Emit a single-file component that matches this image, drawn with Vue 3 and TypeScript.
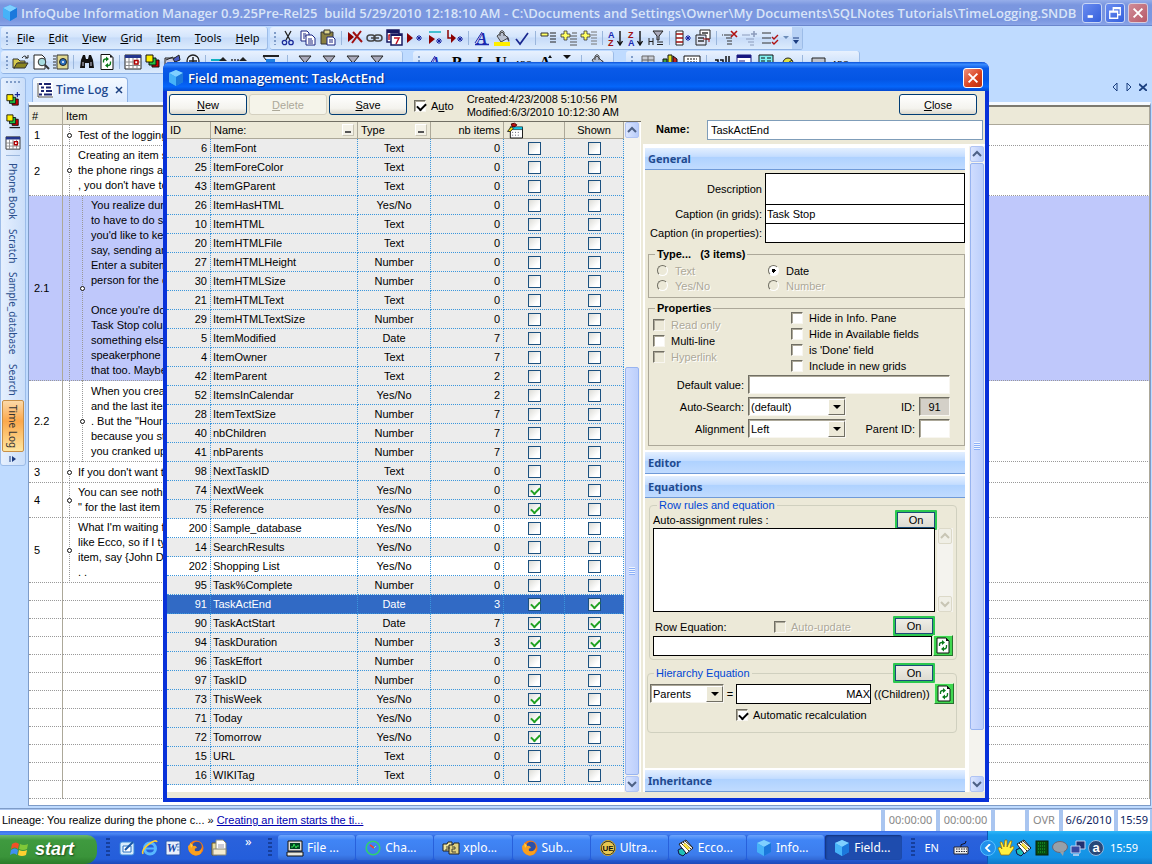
<script setup lang="ts">
import { ref } from 'vue'

interface Field {
  id: number
  name: string
  type: string
  items: number
  form?: boolean
  shown?: boolean
  user?: boolean
}

interface Note {
  no: string
  level: number
  height: number
  text: string
  selected?: boolean
}

const cube =
  '<path d="M8 0L15 3V12L8 16L1 12V3Z" fill="#2f9bf0"/><path d="M8 0L15 3L8 7L1 3Z" fill="#7fd0ff"/><path d="M8 7L15 3V12L8 16Z" fill="#1b78dc"/><path d="M1 3L8 7V16L1 12Z" fill="#46b2f8"/>'

const funnel = '<path d="M2 2H14L9 8V13H7V8Z" fill="#aab" stroke="#222"/>'
const lines = (x: number) =>
  `<path d="M${x} 3H15M${x} 6H15M${x} 9H15M${x} 12H15" stroke="#222"/>`
const plus = '<path d="M3 1H6V4H9V7H6V10H3V7H0V4H3Z" fill="#ffff66" stroke="#333" stroke-width=".8"/>'
const star = (x: number, y: number) =>
  `<path d="M${x} ${y - 3}V${y + 3}M${x - 3} ${y}H${x + 3}M${x - 2} ${y - 2}L${x + 2} ${y + 2}M${x + 2} ${y - 2}L${x - 2} ${y + 2}" stroke="#1420a0"/>`
const layers =
  '<path d="M7 6H14V13H7Z" fill="#d00000" stroke="#111"/><path d="M4 4H11V11H4Z" fill="#20c040" stroke="#111"/><path d="M1 1H8V8H1Z" fill="#ffee00" stroke="#111"/>'
const calendar =
  '<path d="M0 1H16V15H0Z" fill="#fff" stroke="#222"/><path d="M0 1H16V4H0Z" fill="#23358c"/><path d="M4 4V15M8 4V15M12 4V15M0 8H16M0 11.500H16" stroke="#888"/><path d="M9.500 6.500H13V10H9.500Z" fill="#fff" stroke="#b00000" stroke-width="1.500"/>'
const refresh =
  '<path d="M2 .5H11L14 3.500V15.500H2Z" fill="#fff" stroke="#111"/><path d="M11 .5V3.500H14Z" fill="#111"/><path d="M4.500 8.500V7Q4.500 5 7 5M11.500 7.500V9Q11.500 11.500 9 11.500" fill="none" stroke="#0a7a1a" stroke-width="1.300"/><path d="M7 2.500L10 5L7 7.500ZM9 9L6 11.500L9 14Z" fill="#0a7a1a"/>'
const bucket =
  '<path d="M3 6L8 2L14 8L7 12Z" fill="#b8c0d0" stroke="#444"/><path d="M6 6V2Q8 -1 10 2V6" fill="none" stroke="#444"/><path d="M13 6Q16 8 15 12L13 9Z" fill="#445"/>'
const fox =
  '<circle cx="8" cy="8" r="7.500" fill="#f07818"/><circle cx="9" cy="6.500" r="4.800" fill="#2c50a8"/><path d="M0 6Q3 3 5 6Q8 5 9 8Q6 8 7 11Q11 13 14 8Q14 16 7 15.500Q0 14 0 6Z" fill="#f8a020"/><path d="M2 3L5 5L3 8Z" fill="#ffd040"/>'
const ecco =
  '<path d="M1 4L8 0L15 8L8 14Z" fill="#fff" stroke="#222"/><path d="M3 3L11 11M5 2L13 9M7 1L15 8" stroke="#222"/><path d="M7 3L12 8L10 10L5 5Z" fill="#ffe640"/><path d="M0 10L4 8L8 13L5 16L1 14Z" fill="#20c0b8" stroke="#114"/>'
const letter = (t: string, extra = '') =>
  `<text x="8" y="14" text-anchor="middle" font-family="Liberation Serif" font-size="16" font-weight="bold" ${extra}>${t}</text>`
const sortLetters = (top: string, bottom: string, c1: string, c2: string) =>
  `<text x="0" y="8" font-family="Liberation Sans" font-size="9" font-weight="bold" fill="${c1}">${top}</text><text x="0" y="16" font-family="Liberation Sans" font-size="9" font-weight="bold" fill="${c2}">${bottom}</text><path d="M12 1V14M9.500 11L12 15L14.500 11" stroke="#111" fill="none" stroke-width="1.400"/>`

const icons: Record<string, string> = {
  cube,
  cut: '<path d="M5 1L10 10M11 1L6 10" stroke="#222" stroke-width="1.300"/><circle cx="4.500" cy="12.500" r="2.200" fill="none" stroke="#1a2a9a" stroke-width="1.300"/><circle cx="11" cy="12.500" r="2.200" fill="none" stroke="#1a2a9a" stroke-width="1.300"/>',
  copy: '<path d="M1 1H7L9 3V11H1Z" fill="#fff" stroke="#1a2480"/><path d="M6 5H12L15 8V15H6Z" fill="#fff" stroke="#1a2480"/><path d="M3 4H6M3 6H6M3 8H5M8 9H12M8 11H13M8 13H13" stroke="#1a2480"/>',
  paste: '<path d="M1 2H13V14H1Z" fill="#8a8040" stroke="#333"/><path d="M4 0H10V4H4Z" fill="#ddd48a" stroke="#333"/><path d="M7 7H13L15 9V15H7Z" fill="#fff" stroke="#1a2480"/><path d="M9 10H13M9 12H13" stroke="#1a2480"/>',
  delRow: '<path d="M1 2L7 7L1 12Z" fill="#8c0000"/><path d="M6 2L15 12M14 1L5 13" stroke="#a01010" stroke-width="2"/>',
  link: '<rect x="0" y="5" width="8" height="6" rx="3" fill="none" stroke="#444" stroke-width="1.500"/><rect x="7" y="5" width="8" height="6" rx="3" fill="none" stroke="#444" stroke-width="1.500"/><path d="M4 8H12" stroke="#444" stroke-width="1.500"/>',
  seven: '<path d="M0 0H12V12H0Z" fill="#fff" stroke="#181860" stroke-width="1.500"/><path d="M0 0H12V3H0Z" fill="#181860"/><path d="M4 4H15V15H4Z" fill="#fff" stroke="#181860" stroke-width="1.500"/><path d="M4 4H15V6H4Z" fill="#181860"/><path d="M1.500 5H3M2 5V10M7 8H12L9 14" fill="none" stroke="#c01020" stroke-width="1.500"/>',
  play1: '<path d="M0 3L6 8L0 13Z" fill="#8c0000"/>' + star(12, 8),
  play2: '<path d="M2 2H14" stroke="#10b0c0" stroke-width="1.300"/><path d="M2 5L8 9L2 14Z" fill="#8c0000"/>' + star(12, 11),
  play3: '<path d="M1 0V8H6" stroke="#8c0000" fill="none" stroke-width="1.500"/><path d="M4 4L9 8L4 13Z" fill="#8c0000"/>' + star(13, 9),
  fontA: letter('A', 'fill="#1a28b0" font-style="italic"') + '<path d="M1 14.500H15" stroke="#1a28b0" stroke-width="1.500"/><path d="M1 13L8 2" stroke="#1a28b0"/>',
  bucket: bucket + '<path d="M0 12H16V16H0Z" fill="#ffee00"/>',
  check: '<path d="M2 9L6 14L14 3" fill="none" stroke="#1a2890" stroke-width="1.700"/>',
  item1: '<path d="M0 3H7V6H0Z" fill="#ffff66" stroke="#333"/>' + lines(9),
  item2: plus + '<path d="M11 3H16M9 6H16M9 9H16M9 12H16M9 15H16" stroke="#555"/>',
  item3: plus + '<path d="M10 2H16M10 5H16M10 8H16M10 11H16M10 14H16" stroke="#777"/>',
  az: sortLetters('A', 'Z', '#1a28b0', '#a01010'),
  za: sortLetters('Z', 'A', '#a01010', '#1a28b0'),
  filterH: '<path d="M5 1H15L11 6V10H9V6Z" fill="#aab" stroke="#222"/><path d="M1 8V15M5 8V15M1 11.500H5M9 12H15M9 14.500H15" stroke="#222"/>',
  colNew: '<path d="M1 1H8V15H1Z" fill="#fff" stroke="#222"/><path d="M1 4H8M1 8H8M1 12H8" stroke="#a01010" stroke-width="1.500"/>' + star(13, 8),
  forms: '<path d="M5 0H15V9H5Z" fill="#fff" stroke="#222"/><path d="M1 5H11V15H1Z" fill="#dde4f4" stroke="#222"/><path d="M7 3H13M3 8H9M3 11H9" stroke="#333" stroke-width="1.300"/><path d="M8 9H14V12" stroke="#a01010" fill="none"/>',
  delLines: '<path d="M2 5H10M4 8H10M5 11H10M5 14H10M0 5H1" stroke="#333"/><path d="M9 1L15 7M15 1L9 7" stroke="#b01010" stroke-width="1.600"/>',
  addLines: '<path d="M0 5H8M4 9H12M6 12H12M8 15H12" stroke="#8c9cbc"/><path d="M12 1V7M9 4H15" stroke="#8c9cbc" stroke-width="1.600"/>',
  doneLines: '<path d="M0 3H9M0 8H9M0 13H9" stroke="#333"/><path d="M10 7L12 9L16 5M10 12L12 14L16 10" fill="none" stroke="#b01010" stroke-width="1.400"/>',
  open: '<path d="M0 5H5L7 7H12V9H5L2 14H0Z" fill="#d8cc50" stroke="#333"/><path d="M4 9H15L12 14H1Z" fill="#8a8420" stroke="#333"/><path d="M9 4Q12 0 14 4M12 4H15V1" fill="none" stroke="#222"/>',
  preview: '<path d="M1 1H9L12 4V15H1Z" fill="#fff" stroke="#222"/><circle cx="9" cy="8" r="3.800" fill="#a8dce0" stroke="#333"/><path d="M12 11L16 15" stroke="#333" stroke-width="2"/>',
  book: '<path d="M4 1H15V15H4Z" fill="#e0d890" stroke="#333"/><circle cx="10" cy="8" r="3.500" fill="#2c70c0" stroke="#222"/><circle cx="10" cy="8" r="1" fill="#fff"/><path d="M0 2H3M0 5H3M0 8H3M0 11H3M0 14H3" stroke="#333"/>',
  find: '<path d="M2 6L4 1H6L7 5H9L10 1H12L14 6L15 14H10V9H6V14H1Z" fill="#111"/><path d="M4 8V12M12 8V12" stroke="#ccd"/>',
  refresh,
  calendar,
  layers,
  layersPlus: '<g transform="translate(0 2)">' + layers + '</g><path d="M13 0V6M10 3H16" stroke="#1a2890" stroke-width="1.300"/>',
  layersLine: layers + '<path d="M4 15.500H16" stroke="#222" stroke-width="1.500"/>',
  tools: '<path d="M0 4H10V15H0Z" fill="#ccd" stroke="#222"/><path d="M8 5L14 1L15 6L10 8Z" fill="#4858c0" stroke="#222"/><path d="M1 6L8 3" stroke="#222"/>',
  zoomIn: '<circle cx="8" cy="7" r="6" fill="#e8f0fc" stroke="#222" stroke-width="1.300"/><path d="M8 3V11M4 7H12" stroke="#222" stroke-width="1.500"/>',
  arrowL: '<path d="M0 6H10" stroke="#10b0c0" stroke-width="2"/><path d="M12 3L8 7H16Z" fill="#222"/>',
  arrowR: '<path d="M0 6H8" stroke="#333" stroke-width="1.500" stroke-dasharray="2 1"/><path d="M12 3L8 7H16Z" fill="#222"/>',
  bar: '<path d="M0 1H16V3H0Z" fill="#222"/><path d="M3 5H12V8H3Z" fill="#2080e0"/><path d="M0 2L3 6" stroke="#222"/>',
  filter: funnel,
  bold: letter('B'),
  italic: letter('I', 'font-style="italic"'),
  under: letter('U'),
  abc: '<text x="0" y="12" font-family="Liberation Sans" font-size="8">ABC</text><path d="M0 9H16" stroke="#222"/>',
  grow: letter('A') + '<path d="M11 4L13 1L15 4Z" fill="#111"/>',
  shrink: '<path d="M4 1H12L8 5Z" fill="#111"/>',
  bucket2: bucket,
  grid4: '<path d="M2 2H14V14H2Z" fill="#c8ccd4" stroke="#666"/><path d="M8 2V14M2 6H14" stroke="#666"/>',
  chart: '<path d="M1 5H5V15H1Z" fill="#40a040" stroke="#111"/><path d="M6 1H10V15H6Z" fill="#e0e020" stroke="#111"/><path d="M11 2L15 5V15H11Z" fill="#c02020" stroke="#111"/>',
  sheet: '<path d="M0 2H16V14H0Z" fill="#fff" stroke="#111"/><path d="M3 5H13M3 8H13" stroke="#111" stroke-dasharray="2 1"/>',
  glyphs: '<path d="M1 6H4V9M6 6H9V9M12 2V9M15 2V9" stroke="#111" fill="none" stroke-width="1.500"/>',
  panel: '<path d="M1 1H15V14H1Z" fill="#fff" stroke="#181880"/><path d="M1 1H15V4H1Z" fill="#181880"/><path d="M3 7H9" stroke="#181880"/>',
  cyan: '<path d="M1 1H15V14H1Z" fill="#80f0f0" stroke="#111"/><path d="M3 4H7M9 4H13M3 7H7M9 7H13" stroke="#111"/>',
  ball: '<circle cx="8" cy="9" r="5" fill="#e0e040" stroke="#222"/><path d="M8 9L12 6" stroke="#222"/>',
  card: '<path d="M2 4H15V14H2Z" fill="#c0c4cc" stroke="#222"/>',
  outline: '<rect x="0" y="0" width="16" height="16" fill="#fff"/><path d="M1 1V15H16" stroke="#222" fill="none" stroke-width=".8"/><path d="M2 2H5M7 2H14M4 5.500H7M9 5.500H14M4 9H7M9 9H15M2 12.500H5M7 12.500H15" stroke="#1c2470" stroke-width="1.800"/>',
  form: '<path d="M3 5H16V16H3Z" fill="#fff" stroke="#111"/><path d="M3 4H16V7H3Z" fill="#10c8e8" stroke="#111" stroke-width=".6"/><path d="M5 10H14M5 13H14" stroke="#556" stroke-dasharray="1 2"/><path d="M4 1Q8 -1 10 2L8 4H5Z" fill="#c01010" stroke="#400"/><path d="M0 9L4 4L6 6L3 9Z" fill="#ffee00" stroke="#222"/>',
  outlook: '<rect x="1" y="2" width="14" height="13" rx="2" fill="#d8ecfc" stroke="#3888d8"/><path d="M4 6H12V12H4Z" fill="#fff" stroke="#2870c0"/><path d="M6 10L14 2" stroke="#1858a8" stroke-width="2"/>',
  ie: '<circle cx="8" cy="8.500" r="5.500" fill="none" stroke="#58b8ff" stroke-width="3"/><path d="M4 8.500H13" stroke="#58b8ff" stroke-width="2"/><path d="M1 14Q-1 10 7 4Q14 -1 15 2" fill="none" stroke="#ffd030" stroke-width="1.600"/>',
  word: '<rect x="1" y="1" width="14" height="14" rx="1" fill="#e8f0fc" stroke="#2858b0"/><text x="7" y="12" text-anchor="middle" font-family="Liberation Serif" font-size="12" font-weight="bold" font-style="italic" fill="#1848a8">W</text><path d="M12 4H15M12 7H15M12 10H15" stroke="#6888c0"/>',
  fox,
  docs: '<path d="M1 3H6V15H1Z" fill="#e8dca0" stroke="#705c20"/><path d="M5 0H12L15 3V13H5Z" fill="#fff" stroke="#887"/><path d="M2 9H15V15H2Z" fill="#f4ecd0" stroke="#887"/><path d="M7 5H13M7 7H13" stroke="#99a"/>',
  monitor: '<path d="M1 1H15V11H1Z" fill="#ddd" stroke="#111"/><path d="M3 3H13V9H3Z" fill="#042"/><path d="M4 7H6L7 4L9 8L10 6H12" stroke="#30e050" fill="none"/><path d="M0 12H16V16H0Z" fill="#e8e8e0" stroke="#111"/>',
  change: '<circle cx="8" cy="8" r="6.800" fill="none" stroke="#30d070" stroke-width="1.600"/><path d="M5 5L9 8" stroke="#f04030" stroke-width="1.600"/><path d="M9 8L11 6" stroke="#80ffa0"/>',
  xplorer: '<path d="M0 4H4L5 2H9V11H0Z" fill="#f0e4a0" stroke="#222"/><path d="M6 5H10L11 3H16V14H6Z" fill="#e0d080" stroke="#222"/><path d="M3 7H6V9H3V11M9 7H12V9H9V12H13" stroke="#443" fill="none"/>',
  ultra: '<circle cx="8" cy="8" r="7.500" fill="#222" stroke="#d0a828"/><circle cx="8" cy="8" r="6.300" fill="#e8c850"/><text x="8" y="11" text-anchor="middle" font-family="Liberation Sans" font-size="8" font-weight="bold" fill="#111">UE</text>',
  ecco,
  keyboard: '<path d="M1 7H15V14H1Z" fill="#eee" stroke="#223"/><path d="M3 9H14M3 11.500H14" stroke="#223" stroke-dasharray="1.500 1"/><path d="M8 7Q7 4 10 4Q13 4 13 1" stroke="#112" fill="none"/>',
  hand: '<path d="M3 15L0 8L2 7L4 9L2 2H4L6 7L7 0H9L9 7L12 1H14L12 8L15 6L16 8L11 15Z" fill="#fff040" stroke="#986800" stroke-width=".7"/>',
  meter: '<rect x="2" y="1" width="12" height="14" fill="#064a10" stroke="#0a2008"/><path d="M4 3H12M4 6H12M4 9H12M4 12H12" stroke="#20b030" stroke-dasharray="1 1"/>',
  bubble: '<ellipse cx="8" cy="7" rx="7.500" ry="5.500" fill="#98a0a8" stroke="#667"/><path d="M8 12L11 16L12 11Z" fill="#98a0a8"/>',
  net: '<path d="M6 1H15V9H6Z" fill="#203070" stroke="#c0d0f0"/><path d="M1 6H10V13H1Z" fill="#3848a0" stroke="#c0d0f0"/><path d="M3 15H9" stroke="#d0d8f0" stroke-width="1.500"/>',
  avast: '<circle cx="8" cy="8" r="7.500" fill="#284878" stroke="#90b8e0"/><text x="8" y="12" text-anchor="middle" font-family="Liberation Sans" font-size="13" font-weight="bold" fill="#fff">a</text>',
}

const menus = ['File', 'Edit', 'View', 'Grid', 'Item', 'Tools', 'Help']
const editBar = ['cut', 'copy', 'paste', '|', 'delRow', 'link', 'seven', 'play1', 'play2', 'play3', '|', 'fontA', 'bucket', 'check', '|', 'item1', 'item2', 'item3', '|', 'az', 'za', 'filterH', '|', 'colNew', 'forms', '|', 'delLines', 'addLines', 'doneLines']
const fileBar = ['open', 'preview', 'book', '|', 'find', 'refresh', '|', 'calendar', 'layers', 'tools', 'zoomIn', '|', 'arrowL', 'arrowR']
const filterBar = ['bar', '|', 'filter', 'filter', 'filter', 'filter']
const fontBar = ['fontA', 'bold', 'italic', 'under', 'abc', 'grow', 'shrink', '|', 'bucket2']
const viewBar = ['grid4', 'chart', 'sheet', '|', 'glyphs', 'panel', 'cyan', 'ball', '|', 'card', 'abc']
const sideIcons = ['layersPlus', 'layersLine', 'calendar']
const sideTabs = ['Phone Book', 'Scratch', 'Sample_database', 'Search']

const notes: Note[] = [
  { no: '1', level: 1, height: 21, text: 'Test of the logging' },
  { no: '2', level: 1, height: 50, text: "Creating an item st\nthe phone rings an\n, you don't have to" },
  { no: '2.1', level: 2, height: 185, selected: true, text: "You realize during\nto have to do so\nyou'd like to kee\nsay, sending an\nEnter a subitem\nperson for the c\n\nOnce you're do\nTask Stop colum\nsomething else\nspeakerphone\nthat too. Maybe" },
  { no: '2.2', level: 2, height: 81, text: 'When you creat\nand the last item\n. But the "Hours\nbecause you st\nyou cranked up' },
  { no: '3', level: 1, height: 21, text: "If you don't want t" },
  { no: '4', level: 1, height: 35, text: 'You can see nothi\n" for the last item' },
  { no: '5', level: 1, height: 65, text: "What I'm waiting fo\nlike Ecco, so if I ty\nitem, say {John D\n. ." },
]

const f = (id: number, name: string, type: string, items: number, more: Partial<Field> = {}): Field => ({ id, name, type, items, ...more })
const fields = ref<Field[]>([
  f(6, 'ItemFont', 'Text', 0),
  f(25, 'ItemForeColor', 'Text', 0),
  f(43, 'ItemGParent', 'Text', 0),
  f(26, 'ItemHasHTML', 'Yes/No', 0),
  f(10, 'ItemHTML', 'Text', 0),
  f(20, 'ItemHTMLFile', 'Text', 0),
  f(27, 'ItemHTMLHeight', 'Number', 0),
  f(30, 'ItemHTMLSize', 'Number', 0),
  f(21, 'ItemHTMLText', 'Text', 0),
  f(29, 'ItemHTMLTextSize', 'Number', 0),
  f(5, 'ItemModified', 'Date', 7),
  f(4, 'ItemOwner', 'Text', 7),
  f(42, 'ItemParent', 'Text', 2),
  f(52, 'ItemsInCalendar', 'Yes/No', 2),
  f(28, 'ItemTextSize', 'Number', 7),
  f(40, 'nbChildren', 'Number', 7),
  f(41, 'nbParents', 'Number', 7),
  f(98, 'NextTaskID', 'Text', 0),
  f(74, 'NextWeek', 'Yes/No', 0, { form: true }),
  f(75, 'Reference', 'Yes/No', 0, { form: true }),
  f(200, 'Sample_database', 'Yes/No', 0, { user: true }),
  f(14, 'SearchResults', 'Yes/No', 0),
  f(202, 'Shopping List', 'Yes/No', 0, { user: true }),
  f(95, 'Task%Complete', 'Number', 0),
  f(91, 'TaskActEnd', 'Date', 3, { form: true, shown: true }),
  f(90, 'TaskActStart', 'Date', 7, { form: true, shown: true }),
  f(94, 'TaskDuration', 'Number', 3, { form: true, shown: true }),
  f(96, 'TaskEffort', 'Number', 0),
  f(97, 'TaskID', 'Number', 0),
  f(73, 'ThisWeek', 'Yes/No', 0, { form: true }),
  f(71, 'Today', 'Yes/No', 0, { form: true }),
  f(72, 'Tomorrow', 'Yes/No', 0, { form: true }),
  f(15, 'URL', 'Text', 0),
  f(16, 'WIKITag', 'Text', 0),
])
const selectedId = ref(91)

const tasks = [
  { icon: 'monitor', label: 'File ...' },
  { icon: 'change', label: 'Cha...' },
  { icon: 'xplorer', label: 'xplo...' },
  { icon: 'fox', label: 'Sub...' },
  { icon: 'ultra', label: 'Ultra...' },
  { icon: 'ecco', label: 'Ecco...' },
  { icon: 'cube', label: 'Info...' },
  { icon: 'cube', label: 'Field...', active: true },
]
const quick = ['outlook', 'ie', 'word', 'fox', 'docs']
const tray = ['hand', 'ecco', 'meter', 'bubble', 'net', 'avast']
</script>

<template>
  <div class="desktop">
    <header class="titlebar">
      <svg class="title-icon" viewBox="0 0 16 16" v-html="icons.cube" />
      <h1>InfoQube Information Manager 0.9.25Pre-Rel25&nbsp; build 5/29/2010 12:18:10 AM - C:\Documents and Settings\Owner\My Documents\SQLNotes Tutorials\TimeLogging.SNDB</h1>
      <button class="wbtn" aria-label="Minimize"><svg viewBox="0 0 16 16"><path d="M3 12H9" stroke="#fff" stroke-width="3" /></svg></button>
      <button class="wbtn" aria-label="Restore"><svg viewBox="0 0 16 16"><path d="M6 5V2H14V10H11M6 3H14M2 6H11V14H2ZM2 7H11" fill="none" stroke="#fff" stroke-width="1.500" /></svg></button>
      <button class="wbtn wclose dim" aria-label="Close"><svg viewBox="0 0 16 16"><path d="M3 3L13 13M13 3L3 13" stroke="#fff" stroke-width="2.200" /></svg></button>
    </header>

    <div class="bars">
      <div class="bar-row">
        <nav class="bar menu">
          <i class="grip" />
          <button v-for="m in menus" :key="m"><u>{{ m[0] }}</u>{{ m.slice(1) }}</button>
        </nav>
        <div class="bar edit-bar">
          <i class="grip" />
          <template v-for="(n, i) in editBar" :key="i">
            <i v-if="n === '|'" class="sep" />
            <button v-else class="tool" :aria-label="n"><svg viewBox="0 0 16 16" v-html="icons[n]" /></button>
          </template>
          <span class="drop"><svg viewBox="0 0 8 8"><path d="M1 2H7L4 5Z" fill="#6c8cb8" /></svg></span>
          <span class="more"><svg viewBox="0 0 8 8"><path d="M1 1H7" stroke="#1c3c80" /><path d="M1 3H7L4 7Z" fill="#1c3c80" /></svg></span>
        </div>
      </div>
      <div class="bar-row">
        <div class="bar file-bar">
          <i class="grip" />
          <template v-for="(n, i) in fileBar" :key="i">
            <i v-if="n === '|'" class="sep" />
            <button v-else class="tool" :aria-label="n"><svg viewBox="0 0 16 16" v-html="icons[n]" /></button>
          </template>
          <span class="filters">
            <template v-for="(n, i) in filterBar" :key="i">
              <i v-if="n === '|'" class="sep" />
              <button v-else class="tool" :aria-label="n"><svg viewBox="0 0 16 16" v-html="icons[n]" /></button>
            </template>
          </span>
        </div>
        <div class="bar font-bar">
          <i class="grip" />
          <template v-for="(n, i) in fontBar" :key="i">
            <i v-if="n === '|'" class="sep" />
            <button v-else class="tool" :aria-label="n"><svg viewBox="0 0 16 16" v-html="icons[n]" /></button>
          </template>
        </div>
        <div class="bar view-bar">
          <i class="grip" />
          <template v-for="(n, i) in viewBar" :key="i">
            <i v-if="n === '|'" class="sep" />
            <button v-else class="tool" :aria-label="n"><svg viewBox="0 0 16 16" v-html="icons[n]" /></button>
          </template>
        </div>
      </div>
    </div>

    <main class="work">
      <aside class="side">
        <i class="side-grip" />
        <button v-for="n in sideIcons" :key="n" class="side-btn" :aria-label="n"><svg viewBox="0 0 16 16" v-html="icons[n]" /></button>
        <i class="side-sep" />
        <button v-for="t in sideTabs" :key="t" class="side-tab">{{ t }}</button>
        <button class="side-tab current">Time Log</button>
        <svg class="side-more" viewBox="0 0 8 8"><path d="M1 1V7" stroke="#1c3c80" /><path d="M3 1V7L7 4Z" fill="#1c3c80" /></svg>
      </aside>
      <section class="doc">
        <div class="tabs">
          <div class="tab">
            <svg class="i16" viewBox="0 0 16 16" v-html="icons.outline" />
            <strong>Time Log</strong>
            <svg class="tab-x" viewBox="0 0 8 8"><path d="M1 1L7 7M7 1L1 7" stroke="#1c4080" stroke-width="1.500" /></svg>
          </div>
          <div class="tab-nav">
            <svg viewBox="0 0 8 8"><path d="M6 0V8L2 4Z" fill="none" stroke="#1c4080" /></svg>
            <svg viewBox="0 0 8 8"><path d="M2 0V8L6 4Z" fill="none" stroke="#1c4080" /></svg>
            <svg viewBox="0 0 8 8"><path d="M0 1L8 8M8 1L0 8" stroke="#1c4080" stroke-width="1.800" /></svg>
          </div>
        </div>
        <div class="sheet">
          <table class="notes">
            <colgroup><col class="c-no"><col></colgroup>
            <thead><tr><th>#</th><th>Item</th></tr></thead>
            <tbody>
              <tr v-for="n in notes" :key="n.no" :class="{ sel: n.selected }" :style="{ height: n.height + 'px' }">
                <td>{{ n.no }}</td>
                <td class="item" :class="'l' + n.level"><div class="node"><i class="dot" /><p>{{ n.text }}</p></div></td>
              </tr>
              <tr v-for="n in 12" :key="'e' + n" class="empty"><td /><td /></tr>
            </tbody>
          </table>
        </div>
      </section>
    </main>

    <footer class="status">
      <div class="lineage">Lineage: You realize during the phone c... » <a href="#">Creating an item starts the ti...</a></div>
      <span class="cell faint w1">00:00:00</span>
      <span class="cell faint w1">00:00:00</span>
      <span class="cell w2"></span>
      <span class="cell faint w2">OVR</span>
      <span class="cell w1">6/6/2010</span>
      <span class="cell w3">15:59</span>
    </footer>

    <footer class="taskbar">
      <button class="start">
        <svg viewBox="0 0 18 18"><path d="M1 4Q5 1 8 4L7 9Q4 6 0 9Z" fill="#f05028" /><path d="M9 4Q13 6 17 4L16 9Q12 11 8 9Z" fill="#80c838" /><path d="M0 10Q4 7 7 10L6 15Q3 12 -1 15Z" fill="#4090f0" /><path d="M8 10Q12 12 16 10L15 15Q11 17 7 15Z" fill="#ffd030" /></svg>
        start
      </button>
      <i class="tgrip" />
      <button v-for="q in quick" :key="q" class="quick" :aria-label="q"><svg viewBox="0 0 16 16" v-html="icons[q]" /></button>
      <span class="chev">»</span>
      <i class="tgrip" />
      <div class="tasks">
        <button v-for="t in tasks" :key="t.label" class="task" :class="{ active: t.active }">
          <svg class="i16" viewBox="0 0 16 16" v-html="icons[t.icon]" />{{ t.label }}
        </button>
      </div>
      <i class="tgrip" />
      <span class="lang">EN</span>
      <svg class="i16" viewBox="0 0 16 16" v-html="icons.keyboard" />
      <div class="tray">
        <button class="tray-arrow" aria-label="Hide icons"><svg viewBox="0 0 8 8"><path d="M6 0L2 4L6 8" fill="none" stroke="#fff" stroke-width="1.800" /></svg></button>
        <svg v-for="t in tray" :key="t" class="i16" viewBox="0 0 16 16" v-html="icons[t]" />
        <time>15:59</time>
      </div>
    </footer>

    <div class="dialog" role="dialog" aria-labelledby="dlg-title">
      <div class="dlg-bar">
        <svg class="title-icon" viewBox="0 0 16 16" v-html="icons.cube" />
        <h2 id="dlg-title">Field management: TaskActEnd</h2>
        <button class="wbtn wclose" aria-label="Close"><svg viewBox="0 0 16 16"><path d="M3 3L13 13M13 3L3 13" stroke="#fff" stroke-width="2.200" /></svg></button>
      </div>
      <div class="dlg-body">
        <div class="actions">
          <button class="btn"><u>N</u>ew</button>
          <button class="btn" disabled><u>D</u>elete</button>
          <button class="btn"><u>S</u>ave</button>
          <label class="auto"><input type="checkbox" class="cb" checked><span>A<u>u</u>to</span></label>
          <p class="stamps">Created:4/23/2008 5:10:56 PM<br>Modified:6/3/2010 10:12:30 AM</p>
          <button class="btn close"><u>C</u>lose</button>
        </div>
        <div class="panes">
          <div class="list">
            <table class="fields">
              <colgroup><col class="f1"><col class="f2"><col class="f3"><col class="f4"><col class="f5"><col class="f6"></colgroup>
              <thead>
                <tr>
                  <th>ID</th>
                  <th><span class="th">Name:<i class="mini" /></span></th>
                  <th><span class="th">Type<i class="mini" /></span></th>
                  <th class="r">nb items</th>
                  <th><svg class="i16 form-icon" viewBox="0 0 16 16" v-html="icons.form" /></th>
                  <th class="c">Shown</th>
                </tr>
              </thead>
              <tbody>
                <tr v-for="x in fields" :key="x.id" :class="{ user: x.user, picked: x.id === selectedId }" @click="selectedId = x.id">
                  <td class="r">{{ x.id }}</td>
                  <td>{{ x.name }}</td>
                  <td class="c">{{ x.type }}</td>
                  <td class="r">{{ x.items }}</td>
                  <td class="c"><input v-model="x.form" type="checkbox" class="xp" :aria-label="x.name + ' form'"></td>
                  <td class="c"><input v-model="x.shown" type="checkbox" class="xp" :aria-label="x.name + ' shown'"></td>
                </tr>
              </tbody>
            </table>
            <div class="scroll">
              <button aria-label="Up"><svg viewBox="0 0 10 10"><path d="M1 7L5 3L9 7" /></svg></button>
              <div class="track"><i class="gap-list" /><i class="thumb" /></div>
              <button aria-label="Down"><svg viewBox="0 0 10 10"><path d="M1 3L5 7L9 3" /></svg></button>
            </div>
          </div>

          <div class="props">
            <div class="name-row"><label for="fname">Name:</label><input id="fname" value="TaskActEnd"></div>
            <div class="prop-frame">
              <div class="sections">
                <button class="sec">General</button>
                <div class="general">
                  <div class="caps">
                    <label for="desc">Description</label><textarea id="desc" class="tall" />
                    <label for="cg">Caption (in grids):</label><input id="cg" value="Task Stop">
                    <label for="cp">Caption (in properties):</label><input id="cp">
                  </div>
                  <fieldset class="group type">
                    <legend>Type...&nbsp;&nbsp; (3 items)</legend>
                    <div class="radios">
                      <label class="off"><input type="radio" name="t" disabled>Text</label>
                      <label><input type="radio" name="t" checked>Date</label>
                      <label class="off"><input type="radio" name="t" disabled>Yes/No</label>
                      <label class="off"><input type="radio" name="t" disabled>Number</label>
                    </div>
                  </fieldset>
                  <fieldset class="group pr">
                    <legend>Properties</legend>
                    <div class="checks">
                      <div class="col-a">
                        <label class="off"><input type="checkbox" class="cb" disabled>Read only</label>
                        <label><input type="checkbox" class="cb">Multi-line</label>
                        <label class="off"><input type="checkbox" class="cb" disabled>Hyperlink</label>
                      </div>
                      <div class="col-b">
                        <label><input type="checkbox" class="cb">Hide in Info. Pane</label>
                        <label><input type="checkbox" class="cb">Hide in Available fields</label>
                        <label><input type="checkbox" class="cb">is 'Done' field</label>
                        <label><input type="checkbox" class="cb">Include in new grids</label>
                      </div>
                    </div>
                    <div class="values">
                      <label for="dv">Default value:</label><input id="dv" class="sunk wide">
                      <label for="as">Auto-Search:</label><span class="sel-box"><select id="as"><option>(default)</option></select></span>
                      <label for="pid">ID:</label><input id="pid" class="sunk gray" value="91" readonly>
                      <label for="al">Alignment</label><span class="sel-box"><select id="al"><option>Left</option></select></span>
                      <label for="par">Parent ID:</label><input id="par" class="sunk">
                    </div>
                  </fieldset>
                </div>
                <button class="sec">Editor</button>
                <button class="sec">Equations</button>
                <div class="equations">
                  <fieldset class="round rules">
                    <legend>Row rules and equation</legend>
                    <div class="line l-auto"><label for="rules">Auto-assignment rules :</label><button class="on">On</button></div>
                    <div class="rules-box">
                      <textarea id="rules" />
                      <div class="scroll dis">
                        <button disabled aria-label="Up"><svg viewBox="0 0 10 10"><path d="M1 7L5 3L9 7" /></svg></button>
                        <div class="track" />
                        <button disabled aria-label="Down"><svg viewBox="0 0 10 10"><path d="M1 3L5 7L9 3" /></svg></button>
                      </div>
                    </div>
                    <div class="line l-row">
                      <label for="req">Row Equation:</label>
                      <label class="off upd"><input type="checkbox" class="cb" disabled>Auto-update</label>
                      <button class="on">On</button>
                    </div>
                    <div class="eq-line"><input id="req" class="black"><button class="redo" aria-label="Recalculate row"><svg viewBox="0 0 16 16" v-html="icons.refresh" /></button></div>
                  </fieldset>
                  <fieldset class="round hier">
                    <legend>Hierarchy Equation</legend>
                    <div class="line l-hier"><button class="on">On</button></div>
                    <div class="eq-line">
                      <span class="sel-box par"><select aria-label="Scope"><option>Parents</option></select></span>
                      <span class="eqs">=</span>
                      <input class="black max" value="MAX" aria-label="Function">
                      <span class="kids">((Children))</span>
                      <button class="redo" aria-label="Recalculate hierarchy"><svg viewBox="0 0 16 16" v-html="icons.refresh" /></button>
                    </div>
                    <label class="recalc"><input type="checkbox" class="cb" checked>Automatic recalculation</label>
                  </fieldset>
                </div>
                <button class="sec">Inheritance</button>
              </div>
              <div class="scroll">
                <button aria-label="Up"><svg viewBox="0 0 10 10"><path d="M1 7L5 3L9 7" /></svg></button>
                <div class="track"><i class="thumb" /><i class="gap-props" /></div>
                <button aria-label="Down"><svg viewBox="0 0 10 10"><path d="M1 3L5 7L9 3" /></svg></button>
              </div>
            </div>
          </div>
        </div>
      </div>
    </div>
  </div>
</template>

<style>
body { margin: 0; }
</style>

<style scoped>
* { box-sizing: border-box; }
.desktop { position: relative; display: flex; flex-direction: column; height: 100vh; min-height: 864px; min-width: 1060px; overflow: hidden; background: #bfdbff; font: 11px/14px "Liberation Sans", Arial, sans-serif; color: #000; }
button, input, select, textarea { font: inherit; color: inherit; margin: 0; padding: 0; border: 0; border-radius: 0; background: none; outline: none; }
button { white-space: nowrap; }
h1, h2, p { margin: 0; }
svg { display: block; flex: none; }
.i16 { width: 16px; height: 16px; overflow: visible; }

.titlebar { display: flex; align-items: center; gap: 3px; height: 26px; flex: none; padding: 0 4px 0 2px; background: linear-gradient(#96aeea, #7a96df 20%, #7b97e0 80%, #8aa5e8); border-bottom: 1px solid #6a86cc; }
.title-icon { width: 16px; height: 16px; }
h1, h2 { flex: 1; min-width: 0; overflow: hidden; white-space: nowrap; font: 600 13px/20px "Open Sans", "Noto Sans", sans-serif; color: #d8e4f8; }
.wbtn { width: 20px; height: 20px; padding: 2px; border: 1px solid #c8d6f6; border-radius: 3px; background: linear-gradient(135deg, #6a8cf0, #3460dc); }
.wbtn svg { width: 14px; height: 14px; }
.wclose { border-color: #fff; background: linear-gradient(135deg, #f0907c, #d8401c 60%, #b83010); }
.wclose.dim { border-color: #d8ccdc; background: linear-gradient(135deg, #d08c98, #b85a68); }

.bars { flex: none; padding-top: 1px; }
.bar-row { display: flex; gap: 2px; height: 24px; padding-left: 1px; }
.bar { display: flex; align-items: center; height: 23px; padding-right: 4px; border-radius: 3px; background: linear-gradient(#e8f1fe, #d4e5fc 45%, #c6dbf8 50%, #dcebfd); border-bottom: 1px solid #8fb2e4; border-right: 1px solid #9cbce8; overflow: hidden; }
.grip { width: 2px; height: 13px; margin: 0 3px 0 5px; background: repeating-linear-gradient(#7f9cc8 0 2px, transparent 2px 4px); flex: none; }
.menu { width: 267px; font: 11px/20px "Noto Sans", "Open Sans", sans-serif; }
.menu .grip { margin-right: 2px; }
.menu button { padding: 0 7px; }
.tool { width: 20px; height: 20px; padding: 2px; flex: none; }
.tool svg { width: 16px; height: 16px; overflow: visible; }
.sep { width: 1px; height: 14px; margin: 0 3px 0 2px; background: #9ab6dc; flex: none; }
.edit-bar { padding-right: 0; }
.edit-bar .grip { margin: 0 2px 0 4px; }
.edit-bar .sep { margin: 0 3px; }
.drop { width: 12px; padding: 0 2px; }
.drop svg { width: 8px; height: 8px; }
.more { display: flex; align-items: flex-end; align-self: stretch; width: 10px; padding-bottom: 4px; background: #b8d2f6; }
.more svg { width: 8px; height: 8px; }
.file-bar { width: 402px; }
.filters { display: flex; gap: 4px; margin-left: 12px; align-items: center; }
.font-bar { width: 201px; margin-left: 8px; }
.view-bar { width: 234px; margin-left: 10px; }
.font-bar, .view-bar { gap: 2px; }

.work { flex: 1; min-height: 0; display: flex; gap: 2px; padding: 2px 1px 2px 0; }
.side { width: 26px; height: 389px; flex: none; display: flex; flex-direction: column; align-items: center; border: 1px solid #9cbce8; border-radius: 3px; background: linear-gradient(90deg, #e6f0fe, #cadef9); }
.side-grip { width: 14px; height: 2px; margin: 3px 0 5px; background: repeating-linear-gradient(90deg, #7f9cc8 0 2px, transparent 2px 4px); flex: none; }
.side-btn { height: 22px; flex: none; }
.side-btn svg { width: 14px; height: 14px; overflow: visible; }
.side-sep { width: 14px; height: 1px; margin: 1px 0 3px; background: #9ab6dc; flex: none; }
.side-tab { writing-mode: vertical-rl; padding: 4px 0 5px; font: 10px/20px "Noto Sans", "Open Sans", sans-serif; color: #2a4f8c; flex: none; }
.side-tab.current { width: 22px; height: 52px; padding: 4px 0; border: 1px solid #c89048; border-radius: 2px; background: linear-gradient(#fcd9a8, #fba84c 40%, #fee6a0); color: #333; }
.side-more { width: 8px; height: 8px; margin-top: 3px; }
.doc { flex: 1; min-width: 0; display: flex; flex-direction: column; }
.tabs { display: flex; justify-content: space-between; height: 25px; flex: none; padding: 0 4px; }
.tab { display: flex; align-items: center; gap: 3px; width: 96px; padding: 0 4px; border: 1px solid #8fb2e4; border-bottom: 0; border-radius: 4px 4px 0 0; background: linear-gradient(#f4f9ff, #dceafe); }
.tab strong { flex: 1; font: 600 12px/20px "Open Sans", "Noto Sans", sans-serif; color: #1f4a90; }
.tab-x { width: 8px; height: 8px; }
.tab-nav { display: flex; align-items: center; gap: 6px; padding-bottom: 6px; }
.tab-nav svg { width: 8px; height: 8px; }
.sheet { flex: 1; min-height: 0; overflow: hidden; border: 1px solid #7e9cc8; border-top: 3px solid #f6faff; background: #fff; }
.notes { width: 100%; table-layout: fixed; border-collapse: separate; border-spacing: 0; border-top: 2px solid #7c7a70; }
.c-no { width: 34px; }
.notes th { height: 18px; padding: 0 3px; text-align: left; font-weight: normal; background: #ece9d8; border-bottom: 1px solid #aca899; border-right: 1px solid #aca899; }
.notes td { padding: 0 5px; border-bottom: 1px dotted #999; border-right: 1px solid #aca899; }
.notes .sel td { background-color: #bfc8fb; }
.notes .item { padding: 0 0 0 3px; background-image: linear-gradient(#999 50%, transparent 50%); background-size: 1px 2px; background-repeat: repeat-y; background-position: 6px 0; }
.notes .l2 { padding-left: 16px; background-image: linear-gradient(#999 50%, transparent 50%), linear-gradient(#999 50%, transparent 50%); background-position: 6px 0, 19px 0; }
.node { display: flex; align-items: center; gap: 5px; }
.dot { width: 5px; height: 5px; flex: none; margin: 0 1px; border: 1px solid #111; border-radius: 50%; background: #fff; }
.node p { white-space: pre; line-height: 15px; }
.empty { height: 18px; }

.status { display: flex; height: 23px; flex: none; gap: 4px; padding: 1px 2px 0 0; border-top: 1px solid #7e9cc8; background: #a9c5f0; line-height: 20px; }
.lineage { flex: 1; padding-left: 2px; background: #fff; white-space: nowrap; }
.lineage a { color: #0000b0; }
.cell { background: #fff; text-align: center; font: 11px/20px "Noto Sans", "Open Sans", sans-serif; color: #0a1c60; }
.faint { color: #888; }
.w1 { width: 51px; }
.w2 { width: 30px; }
.w3 { width: 32px; }

.taskbar { display: flex; align-items: center; height: 33px; flex: none; background: linear-gradient(#3a6ee8, #4a86f4 8%, #2a62dc 18%, #245edb 85%, #1c4ab8); color: #fff; font: 12px/20px "Noto Sans", "Open Sans", sans-serif; }
.start { display: flex; align-items: center; gap: 6px; width: 97px; height: 29px; align-self: flex-end; padding: 0 0 2px 11px; border-radius: 0 10px 12px 0; background: linear-gradient(#6cb66c, #3f9a3f 18%, #3a943a 75%, #2a7c2a); font: italic bold 18px/24px "Liberation Sans", sans-serif; color: #fff; text-shadow: 1px 1px 2px #1a4a1a; }
.start svg { width: 18px; height: 18px; overflow: visible; }
.tgrip { width: 4px; height: 20px; margin: 0 6px 0 9px; background: repeating-linear-gradient(#163f9c 0 2px, transparent 2px 4px); flex: none; }
.quick { width: 23px; height: 24px; padding: 4px 3px; }
.quick svg { width: 16px; height: 16px; overflow: visible; }
.chev { width: 14px; margin-left: 14px; align-self: flex-start; font-size: 13px; }
.tasks { flex: 1; min-width: 0; display: flex; gap: 1px; height: 25px; }
.task { flex: 1; min-width: 0; display: flex; align-items: center; gap: 4px; padding: 0 9px; border-radius: 3px; background: linear-gradient(#6ca4fc, #4085f6 20%, #3c7cec 80%, #3268d4); }
.task.active { background: #1e4cae; box-shadow: inset 1px 1px 2px #12327c; }
.lang { margin: 0 14px 0 3px; font-size: 11px; }
.tray { display: flex; align-items: center; gap: 2px; align-self: stretch; margin-left: 18px; padding-right: 14px; border-left: 1px solid #0c58b8; background: linear-gradient(#30b8f8, #18a0ee 12%, #1492e4 80%, #0f78c8); }
.tray-arrow { width: 16px; height: 16px; margin-left: -8px; padding: 3px; border-radius: 50%; background: #2090ec; border: 1px solid #58c0ff; }
.tray-arrow svg { width: 8px; height: 8px; }
.tray time { margin-left: 4px; font-size: 11px; }

.dialog { position: absolute; inset: 62px 163px 62px; display: flex; flex-direction: column; border: 4px solid #0831d9; border-top: 0; border-radius: 7px 7px 0 0; background: #ece9d8; }
.dlg-bar { display: flex; align-items: center; gap: 4px; height: 29px; flex: none; margin: 0 -4px; padding: 2px 6px 0 5px; border-radius: 7px 7px 0 0; background: linear-gradient(#0a50d8, #3a8cff 8%, #0a5ae8 22%, #0455e4 60%, #0566fa 85%, #0348d0); }
.dlg-bar h2 { color: #fff; text-shadow: 1px 1px 1px #0a2c88; }
.dlg-body { flex: 1; min-height: 0; display: flex; flex-direction: column; }
.actions { display: flex; align-items: center; height: 30px; flex: none; padding: 0 8px 3px 2px; }
.btn { width: 78px; height: 21px; margin-right: 2px; border: 1px solid #003c74; border-radius: 3px; background: linear-gradient(#fff, #f4f3ee 70%, #dcd8cc); }
.btn:disabled { border-color: #d4d0c0; background: #f5f4ea; color: #aca899; }
.auto, .checks label, .upd, .recalc, .radios label { display: flex; align-items: center; gap: 5px; }
.auto { margin: 3px 0 0 5px; }
.stamps { margin: 2px 0 0 13px; line-height: 13px; white-space: nowrap; }
.close { margin: 0 0 0 auto; }
.cb { appearance: none; width: 12px; height: 12px; flex: none; background: #fff; border: 1px solid; border-color: #716f64 #f8f6f0 #f8f6f0 #716f64; box-shadow: inset 1px 1px #aca899; }
.cb:disabled { background: #ece9d8; }
.cb:checked::before { content: ""; display: block; width: 7px; height: 4px; margin: 2px 0 0 2px; border-left: 2px solid #000; border-bottom: 2px solid #000; transform: rotate(-45deg); }
.off { color: #aca899; text-shadow: 1px 1px #fff; }

.panes { flex: 1; min-height: 0; display: flex; padding-bottom: 6px; }
.list { width: 474px; flex: none; display: flex; border-top: 1px solid #716f64; background: #fff; overflow: hidden; }
.fields { width: 457px; align-self: flex-start; table-layout: fixed; border-collapse: separate; border-spacing: 0; }
.f1 { width: 44px; } .f2 { width: 147px; } .f3 { width: 73px; } .f4 { width: 73px; } .f5 { width: 61px; } .f6 { width: 59px; }
.fields th { height: 17px; padding: 0 3px; text-align: left; font-weight: normal; line-height: 16px; background: #ece9d8; border-right: 1px solid #aca899; border-bottom: 1px solid #aca899; }
.fields td { height: 19px; padding: 0 2px; line-height: 18px; background: #ececec; border-right: 1px dotted #3a96dc; border-bottom: 1px dotted #3a96dc; }
.fields .r { text-align: right; padding-right: 3px; }
.fields .c { text-align: center; }
.fields .user td { background: #fff; }
.fields .picked td { background: #316ac5; color: #fff; }
.th { display: flex; justify-content: space-between; align-items: center; }
.mini { display: flex; align-items: flex-end; justify-content: center; width: 12px; height: 12px; padding-bottom: 2px; border: 1px solid; border-color: #fff #c8c4b4 #c8c4b4 #fff; background: #f4f2e8; }
.mini::before { content: ""; width: 6px; height: 2px; background: #555; }
.form-icon { height: 15px; }
.xp { appearance: none; display: block; width: 13px; height: 13px; margin: 0 auto; border: 1px solid #1c5180; background: linear-gradient(135deg, #dcdcd7, #fff 70%); }
.xp:checked::before { content: ""; display: block; width: 7px; height: 4px; margin: 2px 0 0 2px; border-left: 2px solid #21a121; border-bottom: 2px solid #21a121; transform: rotate(-45deg); }

.scroll { width: 16px; flex: none; display: flex; flex-direction: column; background: #f4f3ee; }
.scroll button { height: 16px; margin: 0 1px; border: 1px solid #b0c4f4; border-radius: 2px; background: linear-gradient(90deg, #dce6fe, #b8ccfa); flex: none; }
.scroll svg { width: 10px; height: 10px; margin: 0 auto; fill: none; stroke: #4d6185; stroke-width: 2; }
.scroll.dis button { background: #f0efe6; border-color: #dcd9c8; }
.scroll.dis svg { stroke: #c8c5b4; }
.track { flex: 1; min-height: 0; display: flex; flex-direction: column; padding: 1px; }
.thumb { flex: 410; border: 1px solid #98b4f0; border-radius: 2px; background: repeating-linear-gradient(#eef4fe 0 1px, #8cb0f8 1px 2px) center / 6px 8px no-repeat, linear-gradient(90deg, #cfdcfe, #bccffb); }
.gap-list { flex: 230; }
.gap-props { flex: 33; }

.props { flex: 1; min-width: 0; display: flex; flex-direction: column; padding: 0 0 0 2px; margin-top: -1px; }
.name-row { display: flex; align-items: flex-start; height: 24px; flex: none; padding: 0 2px 0 13px; }
.name-row label { width: 51px; font-weight: bold; line-height: 18px; }
.name-row input { flex: 1; min-width: 0; height: 20px; padding: 0 3px; border: 1px solid #7f9db9; background: #fff; }
.prop-frame { flex: 1; min-height: 0; display: flex; border-top: 2px solid #fff; border-left: 2px solid #fff; background: #fff; }
.sections { flex: 1; min-width: 0; display: flex; flex-direction: column; margin-right: 4px; background: #ece9d8; }
.sec { height: 24px; flex: none; padding: 0 3px; border-top: 2px solid #fff; border-bottom: 1px solid #6f9ad8; background: linear-gradient(#e3efff, #c4ddff 40%, #afd2ff 45%, #c0dbff); text-align: left; font: bold 11px/20px "Noto Sans", "Open Sans", sans-serif; color: #1f4a90; }
.general { flex: none; padding: 3px 0 4px 3px; }
.caps { display: grid; grid-template-columns: 114px 1fr; column-gap: 3px; align-items: center; text-align: right; }
.caps input, .caps textarea { width: 100%; height: 20px; padding: 0 1px; border: 1px solid #000; background: #fff; resize: none; margin-bottom: -1px; }
.caps .tall { height: 32px; }
.caps label { white-space: nowrap; }
fieldset { min-width: 0; margin: 0; padding: 0; border: 1px solid #aca899; }
legend { padding: 0 2px; line-height: 14px; }
.group legend { margin-left: 6px; font-weight: bold; white-space: pre; }
.type { margin-top: 5px; height: 51px; }
.radios { display: grid; grid-template-columns: 111px 1fr; grid-auto-rows: 15px; padding: 2px 0 0 8px; }
.radios input { appearance: none; width: 11px; height: 11px; flex: none; border: 1px solid; border-color: #716f64 #fff #fff #716f64; border-radius: 50%; background: #fff; }
.radios input:disabled { background: #ece9d8; }
.radios input:checked { background: radial-gradient(#000 0 2px, #fff 2px); }
.radios label { gap: 7px; }
.pr { margin-top: 3px; height: 145px; }
.checks { display: grid; grid-template-columns: 138px 1fr; margin-top: -5px; padding-left: 4px; }
.checks label { height: 16px; gap: 6px; }
.col-a { padding-top: 7px; }
.values { display: grid; grid-template-columns: 95px 98px 65px 31px; column-gap: 4px; row-gap: 3px; align-items: center; padding-top: 1px; text-align: right; }
.sunk { width: 100%; height: 19px; padding: 0 4px; border: 1px solid; border-color: #716f64 #f8f6f0 #f8f6f0 #716f64; box-shadow: inset 1px 1px #aca899; background: #fff; }
.wide { grid-column: 2 / 5; }
.gray { background: #d4d0c8; text-align: center; }
.sel-box { position: relative; display: block; height: 19px; border: 1px solid; border-color: #716f64 #f8f6f0 #f8f6f0 #716f64; box-shadow: inset 1px 1px #aca899; background: #fff; }
.sel-box select { appearance: none; display: block; width: 100%; height: 17px; padding: 0 16px 0 2px; }
.sel-box::before { content: ""; position: absolute; top: 1px; right: 0; width: 15px; bottom: 0; background: #ece9d8; border: 1px solid; border-color: #fff #716f64 #716f64 #fff; pointer-events: none; }
.sel-box::after { content: ""; position: absolute; top: 7px; right: 4px; border: 4px solid transparent; border-top-color: #000; border-bottom: 0; pointer-events: none; }

.equations { flex: 1; min-height: 0; padding: 0 8px 0 2px; }
.round { border-color: #d0d0bf; border-radius: 4px; }
.round legend { margin-left: 4px; color: #0046d5; }
.rules { margin: 0 0 6px 2px; padding: 0 3px 3px; }
.line { display: flex; align-items: center; }
.l-auto { height: 16px; }
.on { width: 42px; height: 20px; margin-left: auto; border: 2px solid #2cc850; border-radius: 1px; background: linear-gradient(#f0efe8, #dcdad0); box-shadow: inset 0 0 0 1px #1a4c78; line-height: 14px; }
.l-auto .on { margin-right: 16px; }
.rules-box { display: flex; gap: 2px; height: 84px; }
.rules-box textarea { flex: 1; min-width: 0; border: 1px solid #000; background: #fff; resize: none; }
.l-row { height: 23px; padding: 4px 18px 0 2px; }
.l-row > label { padding-top: 3px; }
.l-row > label:first-child { width: 119px; }
.eq-line { display: flex; align-items: center; }
.black { flex: 1; min-width: 0; height: 20px; border: 1px solid #000; background: #fff; }
.redo { width: 20px; height: 21px; margin-left: 1px; padding: 1px; background: #40d850; border: 1px solid; border-color: #d8f8d0 #2a7030 #2a7030 #d8f8d0; flex: none; }
.redo svg { width: 16px; height: 17px; }
.hier { height: 67px; padding: 0 2px; }
.l-hier { height: 20px; margin-top: -17px; padding-right: 19px; position: relative; }
.par { width: 74px; }
.eqs { width: 12px; text-align: center; }
.max { flex: 0 1 135px; text-align: right; }
.kids { flex: 1; padding-left: 3px; white-space: nowrap; }
.recalc { margin: 4px 0 0 86px; }
</style>
